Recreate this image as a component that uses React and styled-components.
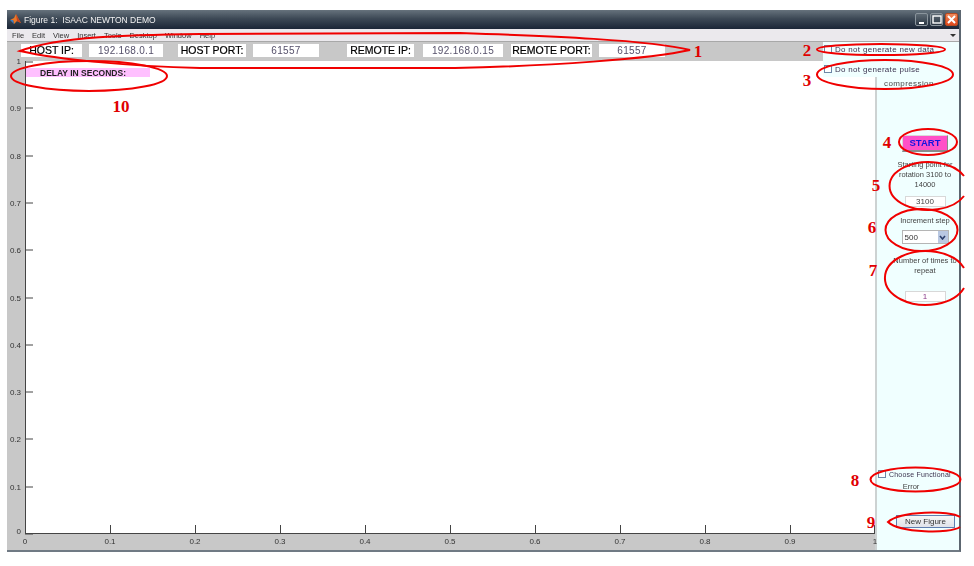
import React from "react";
import styled, { createGlobalStyle } from "styled-components";

const menus = ["File", "Edit", "View", "Insert", "Tools", "Desktop", "Window", "Help"];

const fields = [
  { label: "HOST IP:", labelW: 61, value: "192.168.0.1", valueW: 74, gap: 0, inner: 7 },
  { label: "HOST PORT:", labelW: 68, value: "61557", valueW: 66, gap: 15, inner: 7 },
  { label: "REMOTE IP:", labelW: 67, value: "192.168.0.15", valueW: 80, gap: 28, inner: 9 },
  { label: "REMOTE PORT:", labelW: 81, value: "61557", valueW: 66, gap: 8, inner: 7 },
];

const ticks = [0, 0.1, 0.2, 0.3, 0.4, 0.5, 0.6, 0.7, 0.8, 0.9, 1];

const numbers = [
  ["1", 698, 57],
  ["2", 807, 56],
  ["3", 807, 86],
  ["4", 887, 148],
  ["5", 876, 191],
  ["6", 872, 233],
  ["7", 873, 276],
  ["8", 855, 486],
  ["9", 871, 528],
  ["10", 121, 112],
];

function Logo() {
  return (
    <svg width="11" height="11" viewBox="0 0 11 11">
      <path d="M0 6 L4 4 L6 0 L8 4 L11 9 L7 7 L4 10 L3 6 Z" fill="#e8782a" />
      <path d="M0 6 L3 6 L4 10 Z" fill="#3f7fc4" />
      <path d="M6 0 L8 4 L11 9 L7 7 Z" fill="#c9411c" />
    </svg>
  );
}

function Axes() {
  return (
    <AxesSvg width="850" height="473">
      <line x1="0.5" y1="0" x2="0.5" y2="473" />
      <line x1="0" y1="472.5" x2="850" y2="472.5" />
      {ticks.map((t) => {
        const x = Math.round(t * 850);
        const y = Math.round(473 - t * 473);
        return (
          <g key={t}>
            <line x1="0" y1={Math.max(y, 1)} x2="8" y2={Math.max(y, 1)} />
            <line x1={Math.min(x, 849) + 0.5} y1="464" x2={Math.min(x, 849) + 0.5} y2="473" />
            <text x="-4" y={t === 0 ? 473 : y + 3} textAnchor="end">
              {t}
            </text>
            <text x={x} y="483" textAnchor="middle">
              {t}
            </text>
          </g>
        );
      })}
    </AxesSvg>
  );
}

function Notes() {
  return (
    <Overlay width="974" height="566">
      <path d="M20 51 C60 36 130 35 200 34 L460 33 C550 36 650 40 690 50 C650 59 550 66 455 68 L200 68 C130 66 60 60 20 51 Z" />
      <ellipse cx="89" cy="76" rx="78" ry="15" />
      <ellipse cx="881" cy="49.5" rx="64" ry="5.5" />
      <ellipse cx="885" cy="74.5" rx="68" ry="14.5" />
      <ellipse cx="928" cy="142" rx="29" ry="13" />
      <path d="M964 176 A39 24 0 1 0 964 196" />
      <ellipse cx="921.5" cy="230" rx="36" ry="21" />
      <path d="M964 268 A41 27 0 1 0 964 288" />
      <ellipse cx="915.5" cy="479.5" rx="45" ry="12" />
      <path d="M960 517 C950 510 900 511 888 522 C900 533 950 534 960 527" />
      {numbers.map(([n, x, y]) => (
        <text key={n} x={x} y={y} textAnchor="middle">
          {n}
        </text>
      ))}
    </Overlay>
  );
}

export default function App() {
  return (
    <Page>
      <GlobalStyle />
      <Window>
        <TitleBar>
          <Logo />
          <Title>Figure 1:  ISAAC NEWTON DEMO</Title>
          <Controls>
            <WinButton>
              <svg width="8" height="8"><rect x="1" y="6" width="5" height="2" fill="#fff" /></svg>
            </WinButton>
            <WinButton>
              <svg width="10" height="9"><rect x="1" y="1" width="8" height="7" fill="none" stroke="#fff" strokeWidth="1.4" /></svg>
            </WinButton>
            <WinButton $close>
              <svg width="9" height="9"><path d="M1 1 L8 8 M8 1 L1 8" stroke="#fff" strokeWidth="2" /></svg>
            </WinButton>
          </Controls>
        </TitleBar>
        <MenuBar>
          {menus.map((m) => (
            <MenuItem key={m}>{m}</MenuItem>
          ))}
          <MenuArrow />
        </MenuBar>
        <Figure>
          <Toolbar>
            {fields.map((f) => (
              <Field key={f.label} $gap={f.gap} $inner={f.inner}>
                <FieldLabel $w={f.labelW}>{f.label}</FieldLabel>
                <FieldValue $w={f.valueW}>{f.value}</FieldValue>
              </Field>
            ))}
          </Toolbar>
          <CheckStrip>
            <CheckRow>
              <Box />
              <CheckText>Do not generate new data</CheckText>
            </CheckRow>
            <CheckRow>
              <Box />
              <CheckText>Do not generate pulse</CheckText>
            </CheckRow>
          </CheckStrip>
          <Plot>
            <AxesBox>
              <Axes />
              <DelayLabel>DELAY IN SECONDS:</DelayLabel>
            </AxesBox>
          </Plot>
          <SidePanel>
            <Wrapped>compression</Wrapped>
            <StartButton>START</StartButton>
            <Caption $top={8}>
              Starting point for
              <br />
              rotation 3100 to
              <br />
              14000
            </Caption>
            <NumberInput $top={6}>3100</NumberInput>
            <Caption $top={9}>Increment step</Caption>
            <Select>
              500
              <SelectArrow>
                <svg width="7" height="5" viewBox="0 0 7 5">
                  <path d="M1 1 L3.5 4 L6 1" fill="none" stroke="#2b3f6b" strokeWidth="1.6" />
                </svg>
              </SelectArrow>
            </Select>
            <Caption $top={12}>
              Number of times to
              <br />
              repeat
            </Caption>
            <NumberInput $top={15} $accent>1</NumberInput>
            <BottomGroup>
              <ChooseRow>
                <Box />
                <ChooseText>Choose Functional</ChooseText>
              </ChooseRow>
              <ErrorText>Error</ErrorText>
              <NewFigure>New Figure</NewFigure>
            </BottomGroup>
          </SidePanel>
        </Figure>
      </Window>
      <Notes />
    </Page>
  );
}

const GlobalStyle = createGlobalStyle`
  body {
    margin: 0;
    background: #fff;
    font-family: "Liberation Sans", Arial, sans-serif;
  }
`;

const Page = styled.div`
  position: relative;
  width: 974px;
  height: 566px;
  padding: 10px 0 0 7px;
  box-sizing: border-box;
  overflow: hidden;
`;

const Window = styled.div`
  width: 954px;
  height: 542px;
  display: flex;
  flex-direction: column;
  box-sizing: border-box;
  border-right: 2px solid #5c6670;
  border-bottom: 2px solid #707a84;
  filter: blur(0.4px);
`;

const TitleBar = styled.div`
  height: 19px;
  flex: none;
  display: flex;
  align-items: center;
  padding: 0 1px 0 3px;
  background: linear-gradient(#66727c, #3d4956 45%, #1b2637);
`;

const Title = styled.span`
  margin-left: 3px;
  color: #f2f2f2;
  font-size: 8.5px;
  white-space: pre;
`;

const Controls = styled.div`
  margin-left: auto;
  display: flex;
  gap: 2px;
`;

const WinButton = styled.div`
  width: 13px;
  height: 13px;
  display: flex;
  align-items: center;
  justify-content: center;
  border-radius: 2px;
  border: 1px solid ${(p) => (p.$close ? "#b84a20" : "#8a949c")};
  box-sizing: border-box;
  background: ${(p) => (p.$close ? "linear-gradient(#f0885a, #e0481c)" : "linear-gradient(#5e6a74, #2c3744)")};
`;

const MenuBar = styled.div`
  height: 13px;
  flex: none;
  display: flex;
  align-items: center;
  gap: 8px;
  padding-left: 5px;
  box-sizing: border-box;
  background: #ebe9ed;
  border-bottom: 1px solid #a8a8a8;
`;

const MenuItem = styled.span`
  font-size: 7.5px;
  color: #333;
`;

const MenuArrow = styled.span`
  margin-left: auto;
  margin-right: 3px;
  width: 0;
  height: 0;
  border-left: 3px solid transparent;
  border-right: 3px solid transparent;
  border-top: 3px solid #333;
`;

const Figure = styled.div`
  flex: 1;
  display: grid;
  grid-template-columns: 816px 52px minmax(0, 1fr);
  grid-template-rows: 19px 16px 1fr;
  background: #c8c8c8;
`;

const Toolbar = styled.div`
  grid-column: 1;
  grid-row: 1;
  display: flex;
  align-items: center;
  padding: 0 0 3px 14px;
`;

const Field = styled.div`
  display: flex;
  gap: ${(p) => p.$inner}px;
  margin-left: ${(p) => p.$gap}px;
`;

const FieldLabel = styled.div`
  width: ${(p) => p.$w}px;
  height: 13px;
  background: #fff;
  color: #000;
  font-size: 10.5px;
  line-height: 13px;
  text-align: center;
  white-space: nowrap;
  -webkit-text-stroke: 0.2px #000;
`;

const FieldValue = styled.div`
  width: ${(p) => p.$w}px;
  height: 13px;
  background: #fff;
  color: #55506a;
  font-size: 10px;
  line-height: 13px;
  text-align: center;
  letter-spacing: 0.3px;
`;

const CheckStrip = styled.div`
  grid-column: 2 / 4;
  grid-row: 1 / 3;
  z-index: 1;
  display: flex;
  flex-direction: column;
  gap: 12px;
  padding: 3px 0 0 1px;
  background: #f0ffff;
`;

const CheckRow = styled.div`
  display: flex;
  align-items: center;
  gap: 3px;
  height: 8px;
`;

const Box = styled.span`
  flex: none;
  width: 8px;
  height: 8px;
  box-sizing: border-box;
  background: #fff;
  border: 1px solid #6d87a6;
`;

const CheckText = styled.span`
  font-size: 8px;
  color: #3c3450;
  white-space: nowrap;
  letter-spacing: 0.3px;
`;

const ChooseText = styled.span`
  font-size: 7px;
  color: #3c3450;
  white-space: nowrap;
  letter-spacing: 0.2px;
`;

const Plot = styled.div`
  grid-column: 1 / 3;
  grid-row: 2 / 4;
  padding: 0 0 0 18px;
`;

const AxesBox = styled.div`
  position: relative;
  width: 850px;
  height: 473px;
  background: #fff;
`;

const AxesSvg = styled.svg`
  display: block;
  overflow: visible;

  line {
    stroke: #444;
    stroke-width: 1;
  }
  text {
    fill: #333;
    font-family: "Liberation Sans", Arial, sans-serif;
    font-size: 8px;
  }
`;

const DelayLabel = styled.div`
  position: absolute;
  left: 1px;
  top: 7px;
  width: 124px;
  height: 9px;
  padding-left: 14px;
  box-sizing: border-box;
  background: #ffc0ff;
  color: #222;
  font-size: 8.5px;
  font-weight: bold;
  line-height: 10px;
  white-space: nowrap;
`;

const SidePanel = styled.div`
  grid-column: 3;
  grid-row: 1 / 4;
  min-width: 0;
  display: flex;
  flex-direction: column;
  align-items: center;
  padding: 37px 0 22px 14px;
  background: #f0ffff;
  border-left: 2px solid #cdd2d2;
`;

const Wrapped = styled.div`
  align-self: flex-start;
  margin-left: -7px;
  font-size: 8px;
  line-height: 10px;
  color: #4a4a4a;
  letter-spacing: 0.4px;
`;

const StartButton = styled.div`
  flex: none;
  margin-top: 46px;
  width: 46px;
  height: 17px;
  box-sizing: border-box;
  background: #ff50c8;
  border-top: 1px solid #d9d9d9;
  border-left: 1px solid #d9d9d9;
  border-bottom: 2px solid #8a8a8a;
  border-right: 1px solid #8a8a8a;
  color: #1414e0;
  font-size: 9.5px;
  font-weight: bold;
  line-height: 14px;
  text-align: center;
`;

const Caption = styled.div`
  flex: none;
  margin-top: ${(p) => p.$top}px;
  width: 66px;
  font-size: 7.5px;
  line-height: 10px;
  color: #444;
  text-align: center;
  white-space: nowrap;
`;

const NumberInput = styled.div`
  flex: none;
  margin-top: ${(p) => p.$top}px;
  width: 41px;
  height: 11px;
  box-sizing: border-box;
  background: #fff;
  border: 1px solid #d8d8d8;
  color: ${(p) => (p.$accent ? "#8a3a8a" : "#444")};
  font-size: 8px;
  line-height: 9px;
  text-align: center;
`;

const Select = styled.div`
  flex: none;
  margin-top: 4px;
  width: 47px;
  height: 14px;
  box-sizing: border-box;
  display: flex;
  align-items: center;
  justify-content: space-between;
  padding-left: 2px;
  background: #fff;
  border: 1px solid #b5b5b5;
  color: #333;
  font-size: 8px;
`;

const SelectArrow = styled.span`
  width: 10px;
  height: 12px;
  display: flex;
  align-items: center;
  justify-content: center;
  background: #b9c8e2;
`;

const BottomGroup = styled.div`
  margin-top: auto;
  align-self: stretch;
  margin-left: -14px;
  display: flex;
  flex-direction: column;
`;

const ChooseRow = styled.div`
  display: flex;
  align-items: center;
  gap: 3px;
  height: 10px;
  padding-left: 1px;
`;

const ErrorText = styled.div`
  align-self: center;
  margin: 3px 0 0 -14px;
  font-size: 7.5px;
  line-height: 10px;
  color: #444;
`;

const NewFigure = styled.div`
  align-self: flex-start;
  margin: 23px 0 0 19px;
  width: 59px;
  height: 13px;
  box-sizing: border-box;
  background: linear-gradient(#f6f6f6, #dfe3ea);
  border: 1px solid #5f7fb0;
  color: #333;
  font-size: 8px;
  line-height: 11px;
  text-align: center;
`;

const Overlay = styled.svg`
  position: absolute;
  inset: 0;
  pointer-events: none;

  path,
  ellipse {
    fill: none;
    stroke: #f00000;
    stroke-width: 2;
  }
  text {
    fill: #e00000;
    font-family: "Liberation Serif", "Times New Roman", serif;
    font-size: 17px;
    font-weight: bold;
  }
`;
